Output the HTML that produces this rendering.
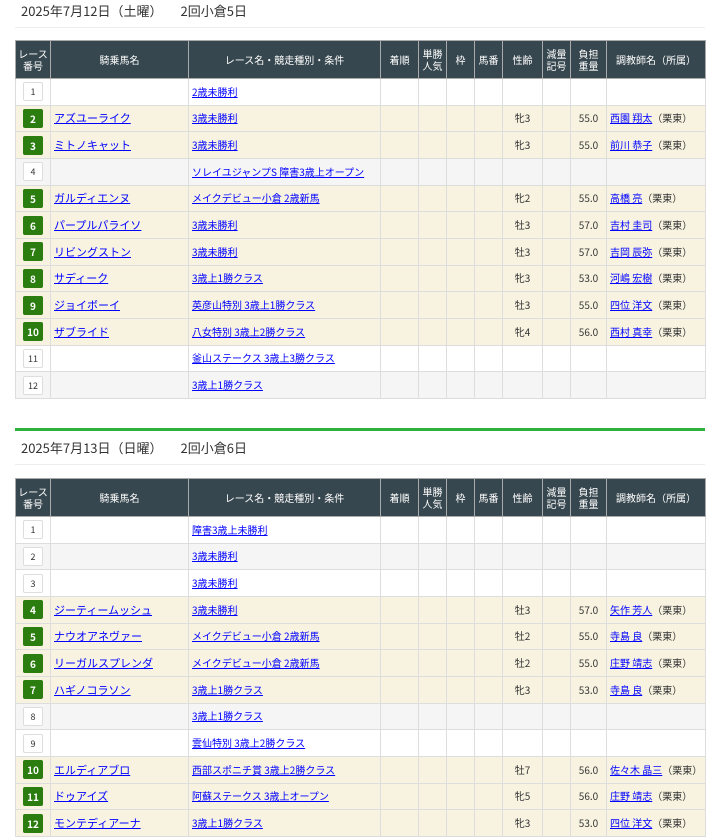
<!DOCTYPE html>
<html><head><meta charset="utf-8"><style>
body{margin:0;background:#fff;font-family:"Noto Sans CJK JP","Liberation Sans",sans-serif;color:#333;width:720px;height:834px;overflow:hidden;position:relative}
.title{position:absolute;left:15px;width:690px;font-size:13px;padding-left:6px;box-sizing:border-box;border-bottom:1px solid #eee;height:28px;line-height:22px}
.title span{margin-left:18px}
table{position:absolute;left:15px;width:691px;border-collapse:collapse;table-layout:fixed;font-size:10px}
th{background:#37474f;color:#fff;font-weight:normal;font-size:10px;line-height:12px;height:37px;border:1px solid #aaa;padding:0}
tr.w,tr.g,tr.c{height:26.67px}
td{border:1px solid #ddd;padding:0 3px;text-align:center;white-space:nowrap;overflow:hidden;line-height:12px;vertical-align:middle}
td.l{text-align:left}
a{color:#00f;text-decoration:underline}
.h{font-size:11px}
tr.w td{background:#fff}tr.g td{background:#f5f5f5}tr.c td{background:#f7f3e0}
.n{display:inline-block;vertical-align:middle;width:18px;height:17px;line-height:17px;border:1px solid #ddd;background:#fff;font-size:9px;color:#333;border-radius:2px}
.n.x{background:#2a7d0e;color:#fff;border-color:#2a7d0e;font-weight:bold;font-size:10px}
.green{position:absolute;left:15px;width:690px;top:428px;height:3px;background:#2db33b}
</style></head><body>
<div class="title" style="top:0">2025年7月12日（土曜）<span>2回小倉5日</span></div>
<table style="top:40px">
<colgroup><col style="width:35px"><col style="width:138px"><col style="width:192px"><col style="width:38px"><col style="width:28px"><col style="width:28px"><col style="width:28px"><col style="width:40px"><col style="width:28px"><col style="width:36px"><col style="width:99px"></colgroup>
<tr><th>レース<br>番号</th><th>騎乗馬名</th><th>レース名・競走種別・条件</th><th>着順</th><th>単勝<br>人気</th><th>枠</th><th>馬番</th><th>性齢</th><th>減量<br>記号</th><th>負担<br>重量</th><th>調教師名（所属）</th></tr>
<tr class="w"><td><span class="n">1</span></td><td></td><td class="l"><a>2歳未勝利</a></td><td></td><td></td><td></td><td></td><td></td><td></td><td></td><td></td></tr>
<tr class="c"><td><span class="n x">2</span></td><td class="l"><a class="h">アズユーライク</a></td><td class="l"><a>3歳未勝利</a></td><td></td><td></td><td></td><td></td><td>牝3</td><td></td><td>55.0</td><td class="l"><a>西園 翔太</a>（栗東）</td></tr>
<tr class="c"><td><span class="n x">3</span></td><td class="l"><a class="h">ミトノキャット</a></td><td class="l"><a>3歳未勝利</a></td><td></td><td></td><td></td><td></td><td>牝3</td><td></td><td>55.0</td><td class="l"><a>前川 恭子</a>（栗東）</td></tr>
<tr class="g"><td><span class="n">4</span></td><td></td><td class="l"><a>ソレイユジャンプS 障害3歳上オープン</a></td><td></td><td></td><td></td><td></td><td></td><td></td><td></td><td></td></tr>
<tr class="c"><td><span class="n x">5</span></td><td class="l"><a class="h">ガルディエンヌ</a></td><td class="l"><a>メイクデビュー小倉 2歳新馬</a></td><td></td><td></td><td></td><td></td><td>牝2</td><td></td><td>55.0</td><td class="l"><a>高橋 亮</a>（栗東）</td></tr>
<tr class="c"><td><span class="n x">6</span></td><td class="l"><a class="h">パープルパライソ</a></td><td class="l"><a>3歳未勝利</a></td><td></td><td></td><td></td><td></td><td>牡3</td><td></td><td>57.0</td><td class="l"><a>吉村 圭司</a>（栗東）</td></tr>
<tr class="c"><td><span class="n x">7</span></td><td class="l"><a class="h">リビングストン</a></td><td class="l"><a>3歳未勝利</a></td><td></td><td></td><td></td><td></td><td>牡3</td><td></td><td>57.0</td><td class="l"><a>吉岡 辰弥</a>（栗東）</td></tr>
<tr class="c"><td><span class="n x">8</span></td><td class="l"><a class="h">サディーク</a></td><td class="l"><a>3歳上1勝クラス</a></td><td></td><td></td><td></td><td></td><td>牝3</td><td></td><td>53.0</td><td class="l"><a>河嶋 宏樹</a>（栗東）</td></tr>
<tr class="c"><td><span class="n x">9</span></td><td class="l"><a class="h">ジョイボーイ</a></td><td class="l"><a>英彦山特別 3歳上1勝クラス</a></td><td></td><td></td><td></td><td></td><td>牡3</td><td></td><td>55.0</td><td class="l"><a>四位 洋文</a>（栗東）</td></tr>
<tr class="c"><td><span class="n x">10</span></td><td class="l"><a class="h">ザブライド</a></td><td class="l"><a>八女特別 3歳上2勝クラス</a></td><td></td><td></td><td></td><td></td><td>牝4</td><td></td><td>56.0</td><td class="l"><a>西村 真幸</a>（栗東）</td></tr>
<tr class="w"><td><span class="n">11</span></td><td></td><td class="l"><a>釜山ステークス 3歳上3勝クラス</a></td><td></td><td></td><td></td><td></td><td></td><td></td><td></td><td></td></tr>
<tr class="g"><td><span class="n">12</span></td><td></td><td class="l"><a>3歳上1勝クラス</a></td><td></td><td></td><td></td><td></td><td></td><td></td><td></td><td></td></tr>
</table>
<div class="green"></div>
<div class="title" style="top:437px">2025年7月13日（日曜）<span>2回小倉6日</span></div>
<table style="top:478px">
<colgroup><col style="width:35px"><col style="width:138px"><col style="width:192px"><col style="width:38px"><col style="width:28px"><col style="width:28px"><col style="width:28px"><col style="width:40px"><col style="width:28px"><col style="width:36px"><col style="width:99px"></colgroup>
<tr><th>レース<br>番号</th><th>騎乗馬名</th><th>レース名・競走種別・条件</th><th>着順</th><th>単勝<br>人気</th><th>枠</th><th>馬番</th><th>性齢</th><th>減量<br>記号</th><th>負担<br>重量</th><th>調教師名（所属）</th></tr>
<tr class="w"><td><span class="n">1</span></td><td></td><td class="l"><a>障害3歳上未勝利</a></td><td></td><td></td><td></td><td></td><td></td><td></td><td></td><td></td></tr>
<tr class="g"><td><span class="n">2</span></td><td></td><td class="l"><a>3歳未勝利</a></td><td></td><td></td><td></td><td></td><td></td><td></td><td></td><td></td></tr>
<tr class="w"><td><span class="n">3</span></td><td></td><td class="l"><a>3歳未勝利</a></td><td></td><td></td><td></td><td></td><td></td><td></td><td></td><td></td></tr>
<tr class="c"><td><span class="n x">4</span></td><td class="l"><a class="h">ジーティームッシュ</a></td><td class="l"><a>3歳未勝利</a></td><td></td><td></td><td></td><td></td><td>牡3</td><td></td><td>57.0</td><td class="l"><a>矢作 芳人</a>（栗東）</td></tr>
<tr class="c"><td><span class="n x">5</span></td><td class="l"><a class="h">ナウオアネヴァー</a></td><td class="l"><a>メイクデビュー小倉 2歳新馬</a></td><td></td><td></td><td></td><td></td><td>牡2</td><td></td><td>55.0</td><td class="l"><a>寺島 良</a>（栗東）</td></tr>
<tr class="c"><td><span class="n x">6</span></td><td class="l"><a class="h">リーガルスプレンダ</a></td><td class="l"><a>メイクデビュー小倉 2歳新馬</a></td><td></td><td></td><td></td><td></td><td>牡2</td><td></td><td>55.0</td><td class="l"><a>庄野 靖志</a>（栗東）</td></tr>
<tr class="c"><td><span class="n x">7</span></td><td class="l"><a class="h">ハギノコラソン</a></td><td class="l"><a>3歳上1勝クラス</a></td><td></td><td></td><td></td><td></td><td>牝3</td><td></td><td>53.0</td><td class="l"><a>寺島 良</a>（栗東）</td></tr>
<tr class="g"><td><span class="n">8</span></td><td></td><td class="l"><a>3歳上1勝クラス</a></td><td></td><td></td><td></td><td></td><td></td><td></td><td></td><td></td></tr>
<tr class="w"><td><span class="n">9</span></td><td></td><td class="l"><a>雲仙特別 3歳上2勝クラス</a></td><td></td><td></td><td></td><td></td><td></td><td></td><td></td><td></td></tr>
<tr class="c"><td><span class="n x">10</span></td><td class="l"><a class="h">エルディアブロ</a></td><td class="l"><a>西部スポニチ賞 3歳上2勝クラス</a></td><td></td><td></td><td></td><td></td><td>牡7</td><td></td><td>56.0</td><td class="l"><a>佐々木 晶三</a>（栗東）</td></tr>
<tr class="c"><td><span class="n x">11</span></td><td class="l"><a class="h">ドゥアイズ</a></td><td class="l"><a>阿蘇ステークス 3歳上オープン</a></td><td></td><td></td><td></td><td></td><td>牝5</td><td></td><td>56.0</td><td class="l"><a>庄野 靖志</a>（栗東）</td></tr>
<tr class="c"><td><span class="n x">12</span></td><td class="l"><a class="h">モンテディアーナ</a></td><td class="l"><a>3歳上1勝クラス</a></td><td></td><td></td><td></td><td></td><td>牝3</td><td></td><td>53.0</td><td class="l"><a>四位 洋文</a>（栗東）</td></tr>
</table>
</body></html>
